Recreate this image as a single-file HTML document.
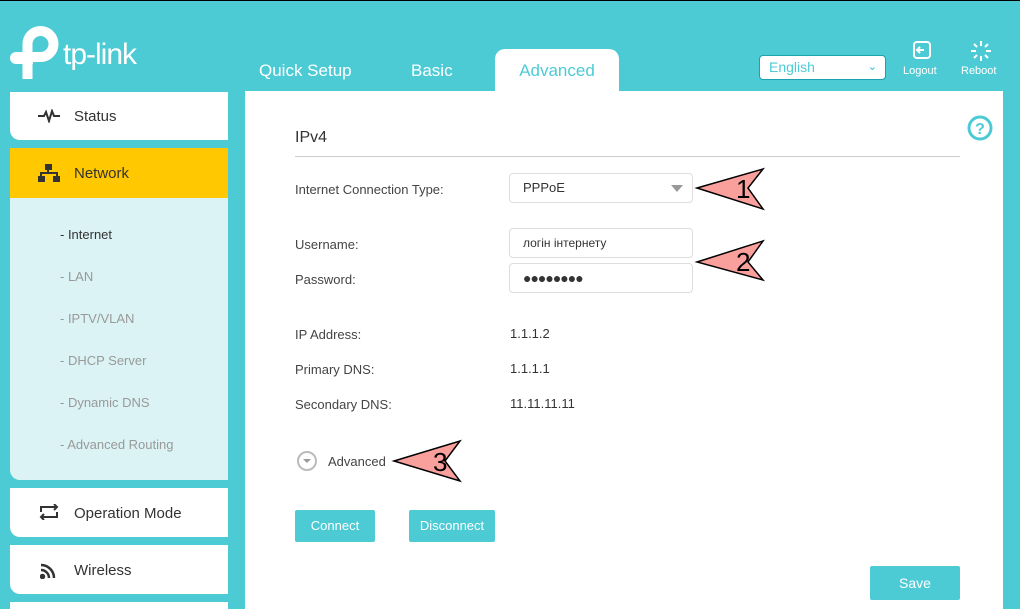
<!DOCTYPE html><html><head><style>
html,body{margin:0;width:1020px;height:609px;overflow:hidden}
body{background:#4dcbd5;font-family:"Liberation Sans","DejaVu Sans",sans-serif;position:relative}
.a{position:absolute}
.side{background:#fff;left:10px;width:218px;border-bottom-left-radius:10px;color:#333;font-size:15px}
.side span{position:absolute;left:64px}
.sub{left:60px;font-size:13px;color:#999}
.lbl{left:295px;font-size:13px;color:#444}
.val{left:510px;font-size:13px;color:#333}
.inp{left:509px;width:182px;height:28px;border:1px solid #ddd;border-radius:4px;background:#fff;font-size:13px;color:#333;line-height:28px;text-indent:13px}
.btn{background:#4dcbd5;color:#fff;font-size:13px;text-align:center;border-radius:2px}
</style></head><body>
<div class="a" style="left:0;top:0;width:1020px;height:1px;background:#000"></div>
<svg class="a" style="left:0;top:0" width="70" height="90"><path d="M27.5 79V44A13 13 0 1 1 40.5 57H33" stroke="#fff" stroke-width="10" fill="none"/><path d="M16 52H33V64H16A6 6 0 0 1 16 52Z" fill="#fff"/></svg>
<div class="a" style="left:63px;top:38px;color:#fff;font-size:30px;letter-spacing:-1px">tp-link</div>
<div class="a" style="left:259px;top:61px;color:#fff;font-size:17px">Quick Setup</div>
<div class="a" style="left:411px;top:61px;color:#fff;font-size:17px">Basic</div>
<div class="a" style="left:495px;top:49px;width:124px;height:46px;background:#fff;border-radius:10px 10px 0 0;color:#4dcbd5;font-size:17px;text-align:center;line-height:44px">Advanced</div>
<div class="a" style="left:759px;top:55px;width:125px;height:23px;background:#fff;border:1px solid #1aa3ad;border-radius:4px;color:#4dcbd5;font-size:14px;line-height:23px;text-indent:9px">English<span style="position:absolute;right:8px;top:0;font-size:11px;font-weight:bold">&#8964;</span></div>
<svg class="a" style="left:912px;top:40px" width="20" height="22" viewBox="0 0 20 22"><rect x="2" y="2" width="16" height="16" rx="3" fill="none" stroke="#fff" stroke-width="2"/><path d="M12 10H6M8 7L5 10L8 13" stroke="#fff" stroke-width="2" fill="none"/></svg>
<div class="a" style="left:903px;top:65px;color:#fff;font-size:11px">Logout</div>
<svg class="a" style="left:970px;top:40px" width="22" height="22" viewBox="0 0 22 22" stroke="#fff" stroke-width="2"><path d="M11 1V6M11 16V21M1 11H6M16 11H21M4 4L7 7M15 15L18 18M4 18L7 15M15 7L18 4"/></svg>
<div class="a" style="left:961px;top:65px;color:#fff;font-size:11px">Reboot</div>
<div class="a" style="left:245px;top:91px;width:758px;height:518px;background:#fff"></div>
<div class="a side" style="top:92px;height:48px"><svg class="a" style="left:28px;top:17px" width="22" height="14" viewBox="0 0 22 14"><path d="M0 7H6L8 3L11 12L14 2L16 7H22" stroke="#333" stroke-width="2" fill="none"/></svg><span style="top:16px">Status</span></div>
<div class="a side" style="top:148px;height:332px;background:#dbf3f5"></div>
<div class="a" style="left:10px;top:148px;width:218px;height:50px;background:#ffc800;font-size:15px;color:#333"><svg class="a" style="left:28px;top:16px" width="22" height="18" viewBox="0 0 22 18" fill="#333"><rect x="7" y="0" width="7" height="6"/><rect x="0" y="12" width="7" height="6"/><rect x="15" y="12" width="7" height="6"/><path d="M10 6V9M3 12V9H19V12" stroke="#333" stroke-width="2" fill="none"/></svg><span style="position:absolute;left:64px;top:17px">Network</span></div>
<div class="a sub" style="top:227px;color:#333">- Internet</div>
<div class="a sub" style="top:269px">- LAN</div>
<div class="a sub" style="top:311px">- IPTV/VLAN</div>
<div class="a sub" style="top:353px">- DHCP Server</div>
<div class="a sub" style="top:395px">- Dynamic DNS</div>
<div class="a sub" style="top:437px">- Advanced Routing</div>
<div class="a side" style="top:488px;height:49px"><svg class="a" style="left:28px;top:16px" width="22" height="16" viewBox="0 0 22 16" stroke="#333" stroke-width="2" fill="none"><path d="M3 8V3H19M16 0L19 3L16 6M19 8V13H3M6 10L3 13L6 16"/></svg><span style="top:17px">Operation Mode</span></div>
<div class="a side" style="top:545px;height:49px"><svg class="a" style="left:30px;top:16px" width="18" height="18" viewBox="0 0 18 18" stroke="#333" stroke-width="2.5" fill="none"><path d="M1 4A13 13 0 0 1 14 17M1 9A8 8 0 0 1 9 17"/><circle cx="2.5" cy="15.5" r="1.5" fill="#333"/></svg><span style="top:17px">Wireless</span></div>
<div class="a side" style="top:602px;height:7px;border-radius:0"></div>
<div class="a" style="left:295px;top:129px;font-size:16px;color:#333">IPv4</div>
<div class="a" style="left:295px;top:156px;width:665px;height:1px;background:#ccc"></div>
<svg class="a" style="left:967px;top:115px" width="26" height="26" viewBox="0 0 26 26"><circle cx="13" cy="13" r="11" fill="none" stroke="#4dcbd5" stroke-width="3"/><text x="13" y="19" font-size="16" font-weight="bold" fill="#4dcbd5" text-anchor="middle" font-family="Liberation Sans">?</text></svg>
<div class="a lbl" style="top:182px">Internet Connection Type:</div>
<div class="a inp" style="top:173px">PPPoE<span style="position:absolute;right:9px;top:11px;width:0;height:0;border:6px solid transparent;border-top:7px solid #999;border-bottom:0"></span></div>
<div class="a lbl" style="top:237px">Username:</div>
<div class="a inp" style="top:228px;font-size:12px">логін інтернету</div>
<div class="a lbl" style="top:272px">Password:</div>
<div class="a inp" style="top:263px;font-size:14px;letter-spacing:-1px">●●●●●●●●</div>
<div class="a lbl" style="top:327px">IP Address:</div><div class="a val" style="top:326px">1.1.1.2</div>
<div class="a lbl" style="top:362px">Primary DNS:</div><div class="a val" style="top:361px">1.1.1.1</div>
<div class="a lbl" style="top:397px">Secondary DNS:</div><div class="a val" style="top:396px">11.11.11.11</div>
<svg class="a" style="left:297px;top:451px" width="20" height="20" viewBox="0 0 20 20"><circle cx="10" cy="10" r="9" fill="none" stroke="#bbb" stroke-width="2"/><path d="M6 8L10 12L14 8Z" fill="#999"/></svg>
<div class="a lbl" style="left:328px;top:454px">Advanced</div>
<div class="a btn" style="left:295px;top:510px;width:80px;height:32px;line-height:32px">Connect</div>
<div class="a btn" style="left:409px;top:510px;width:86px;height:32px;line-height:32px">Disconnect</div>
<div class="a btn" style="left:870px;top:566px;width:90px;height:34px;line-height:34px;font-size:14px">Save</div>
<svg class="a" style="left:0;top:0" width="1020" height="609" font-family="Liberation Sans" font-size="26">
<g fill="#f9a09c" stroke="#000" stroke-width="1.5">
<path d="M697 188L763 169L748 188L763 209Z"/><path d="M697 262L763 241L748 262L763 280Z"/><path d="M394 461L460 441L445 461L460 481Z"/></g>
<text x="736" y="198">1</text><text x="736" y="271">2</text><text x="433" y="471">3</text></svg>
</body></html>
